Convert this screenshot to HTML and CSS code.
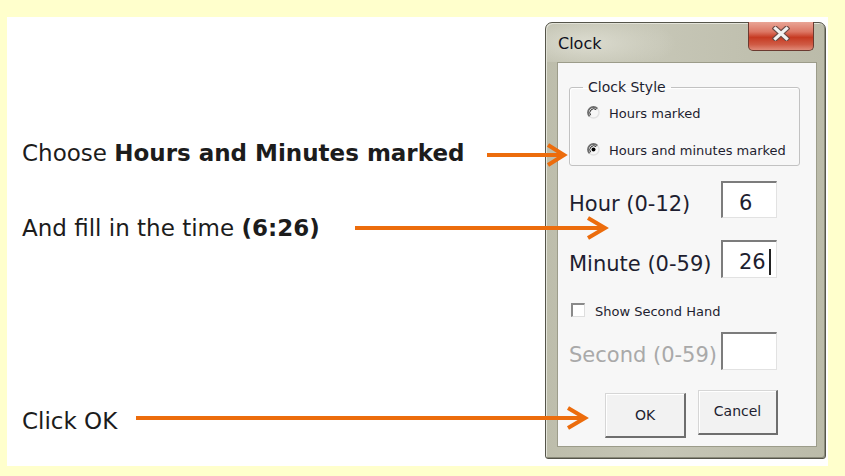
FILE: index.html
```html
<!DOCTYPE html>
<html>
<head>
<meta charset="utf-8">
<link rel="stylesheet" href="styles.css">
</head>
<body>
<div class="panel">
  <div class="notes">
    <p class="note note-1">Choose <b>Hours and Minutes marked</b></p>
    <p class="note note-2">And fill in the time <b>(6:26)</b></p>
    <p class="note note-3">Click OK</p>
  </div>

  <div class="dialog">
    <div class="titlebar">
      <span class="title">Clock</span>
      <div class="close">
        <svg width="18" height="15" viewBox="0 0 18 15">
          <path d="M3.5 2.5 L14.5 12.5 M14.5 2.5 L3.5 12.5" stroke="#6a4a44" stroke-width="5.5" stroke-linecap="square"/>
          <path d="M3.5 2.5 L14.5 12.5 M14.5 2.5 L3.5 12.5" stroke="#f2f2f2" stroke-width="3.2" stroke-linecap="square"/>
        </svg>
      </div>
    </div>
    <div class="client">
      <fieldset class="group">
        <legend>Clock Style</legend>
        <div class="radio-row">
          <svg class="radio" width="13" height="13" viewBox="0 0 13 13">
            <path d="M10.4 2.6 A5.5 5.5 0 0 1 2.6 10.4" fill="none" stroke="#e2e2e2" stroke-width="1.4"/>
            <path d="M2.6 10.4 A5.5 5.5 0 0 1 10.4 2.6" fill="none" stroke="#6c6c6c" stroke-width="1.8"/>
            <path d="M3.6 9.2 A4 4 0 0 1 9.2 3.6" fill="none" stroke="#2a2a2a" stroke-width="1"/>
          </svg>
          <span>Hours marked</span>
        </div>
        <div class="radio-row">
          <svg class="radio" width="13" height="13" viewBox="0 0 13 13">
            <path d="M10.4 2.6 A5.5 5.5 0 0 1 2.6 10.4" fill="none" stroke="#e2e2e2" stroke-width="1.4"/>
            <path d="M2.6 10.4 A5.5 5.5 0 0 1 10.4 2.6" fill="none" stroke="#6c6c6c" stroke-width="1.8"/>
            <path d="M3.6 9.2 A4 4 0 0 1 9.2 3.6" fill="none" stroke="#2a2a2a" stroke-width="1"/>
            <circle cx="6.5" cy="6.5" r="2" fill="#000"/>
          </svg>
          <span>Hours and minutes marked</span>
        </div>
      </fieldset>

      <div class="field-row row-hour">
        <span class="lbl">Hour (0-12)</span>
        <div class="textbox">6</div>
      </div>
      <div class="field-row row-minute">
        <span class="lbl">Minute (0-59)</span>
        <div class="textbox">26<span class="caret"></span></div>
      </div>
      <div class="check-row">
        <span class="checkbox"></span>
        <span>Show Second Hand</span>
      </div>
      <div class="field-row row-second">
        <span class="lbl disabled">Second (0-59)</span>
        <div class="textbox"></div>
      </div>
      <div class="buttons">
        <div class="btn btn-ok">OK</div>
        <div class="btn btn-cancel">Cancel</div>
      </div>
    </div>
  </div>

  <svg class="arrows" width="821" height="449" viewBox="0 0 821 449">
    <g stroke="#ec6c0c" stroke-width="4" fill="none" stroke-linejoin="miter">
      <line x1="480" y1="138" x2="556" y2="138"/>
      <polyline points="541,128 557,138 541,148"/>
      <line x1="348" y1="211" x2="598" y2="211"/>
      <polyline points="581,201 598,211 581,221"/>
      <line x1="129" y1="401" x2="578" y2="401"/>
      <polyline points="561,391 578,401 561,411"/>
    </g>
  </svg>
</div>
</body>
</html>
```

FILE: styles.css
```css
html, body {
  margin: 0;
  padding: 0;
}
body {
  background: #ffffcc;
  padding: 17px 17px 10px 7px;
  width: 845px;
  height: 476px;
  box-sizing: border-box;
  font-family: "DejaVu Sans", Verdana, sans-serif;
}
.panel {
  position: relative;
  width: 821px;
  height: 449px;
  background: #ffffff;
  display: flex;
}
.notes {
  flex: 1;
  padding-left: 15px;
}
.note {
  margin: 0;
  font-size: 23px;
  line-height: 28px;
  color: #1c1c1c;
  white-space: nowrap;
}
.note b {
  font-weight: bold;
}
.note-1 { margin-top: 122px; }
.note-2 { margin-top: 47px; }
.note-3 { margin-top: 165px; }

/* dialog */
.dialog {
  margin-top: 5px;
  margin-right: 2px;
  width: 281px;
  height: 437px;
  box-sizing: border-box;
  border: 1px solid #55554a;
  border-radius: 7px 7px 3px 3px;
  background: linear-gradient(90deg, #bdbdab 0%, #c6c6b6 40%, #bbbba9 100%);
  box-shadow: inset 1px 1px 0 #e4e4da, inset -1px -1px 0 #8a8a7a;
  display: flex;
  flex-direction: column;
}
.titlebar {
  height: 39px;
  display: flex;
  justify-content: space-between;
  align-items: flex-start;
  padding-left: 12px;
  background: radial-gradient(ellipse 90px 30px at 40px 20px, #dcdcd0 0%, rgba(220,220,208,0) 100%);
  border-radius: 7px 7px 0 0;
}
.title {
  font-family: "DejaVu Sans", sans-serif;
  font-size: 16px;
  line-height: 16px;
  margin-top: 13px;
  color: #101020;
}
.close {
  margin-top: -1px;
  margin-right: 11px;
  width: 66px;
  height: 29px;
  box-sizing: border-box;
  border: 1px solid #6b3a30;
  border-top: none;
  border-radius: 0 0 5px 5px;
  background: linear-gradient(180deg, #e9a596 0%, #dc7664 35%, #c63a22 55%, #cf5a44 80%, #e08a78 100%);
  display: flex;
  align-items: center;
  justify-content: center;
}
.close svg {
  margin-top: -6px;
}
.client {
  margin: 0 8px 0 11px;
  width: 260px;
  height: 385px;
  box-sizing: border-box;
  border: 1px solid #9c9c8a;
  background: #f7f7f7;
  padding-left: 11px;
  color: #1e1e30;
  display: flex;
  flex-direction: column;
  align-items: flex-start;
}

/* group box */
.group {
  margin: 16px 0 0 0;
  width: 231px;
  box-sizing: border-box;
  border: 1px solid #c2c2c2;
  border-radius: 3px;
  box-shadow: inset 1px 1px 0 #ffffff;
  padding: 7px 6px 6px 13px;
  display: flex;
  flex-direction: column;
  gap: 17px;
}
.group legend {
  font-size: 14px;
  line-height: 16px;
  padding: 0 5px;
  color: #1e1e30;
}
.radio-row {
  height: 20px;
  display: flex;
  align-items: center;
  padding-left: 4px;
  font-size: 13px;
  white-space: nowrap;
}
.radio-row span {
  padding-top: 3px;
}
.radio {
  flex: none;
  margin-right: 9px;
}

/* rows */
.field-row {
  display: grid;
  grid-template-columns: 152px 56px;
  align-items: center;
  font-size: 21px;
}
.row-hour { margin-top: 15px; height: 37px; }
.row-minute { margin-top: 22px; height: 38px; }
.row-second { margin-top: 15px; height: 38px; }
.lbl {
  white-space: nowrap;
  line-height: 24px;
  padding-top: 9px;
}
.lbl.disabled {
  color: #a9a9a9;
  padding-top: 7px;
}
.textbox {
  height: 100%;
  box-sizing: border-box;
  background: #ffffff;
  border-top: 2px solid #7c7c7c;
  border-left: 2px solid #7c7c7c;
  border-right: 1px solid #e2e2e2;
  border-bottom: 1px solid #e2e2e2;
  padding-left: 16px;
  padding-top: 5px;
  display: flex;
  align-items: center;
  font-size: 21px;
  line-height: 24px;
  color: #1e1e30;
}
.caret {
  display: inline-block;
  width: 0;
  height: 26px;
  margin-left: 3px;
  border-left: 2px solid #222;
}
.check-row {
  margin-top: 25px;
  height: 14px;
  display: flex;
  align-items: center;
  font-size: 13px;
  white-space: nowrap;
}
.check-row span:last-child {
  padding-top: 2px;
}
.checkbox {
  margin-left: 2px;
  margin-right: 10px;
  width: 14px;
  height: 14px;
  box-sizing: border-box;
  background: #ffffff;
  border-top: 2px solid #8a8a8a;
  border-left: 2px solid #8a8a8a;
  border-right: 1px solid #dedede;
  border-bottom: 1px solid #dedede;
}

/* buttons */
.buttons {
  margin-top: 20px;
  padding-left: 36px;
  display: flex;
  align-items: flex-start;
  gap: 12px;
}
.btn {
  height: 45px;
  box-sizing: border-box;
  background: #f2f2f2;
  border-top: 1px solid #d6d6d6;
  border-left: 1px solid #d6d6d6;
  border-right: 2px solid #6e6e6e;
  border-bottom: 2px solid #6e6e6e;
  box-shadow: inset 1px 1px 0 #ffffff;
  display: flex;
  align-items: center;
  justify-content: center;
  font-size: 14px;
  color: #1e1e30;
}
.btn-ok {
  width: 81px;
  margin-top: 3px;
}
.btn-cancel {
  width: 80px;
  padding-bottom: 2px;
}

/* overlay arrows */
.arrows {
  position: absolute;
  left: 0;
  top: 0;
  pointer-events: none;
}
```
